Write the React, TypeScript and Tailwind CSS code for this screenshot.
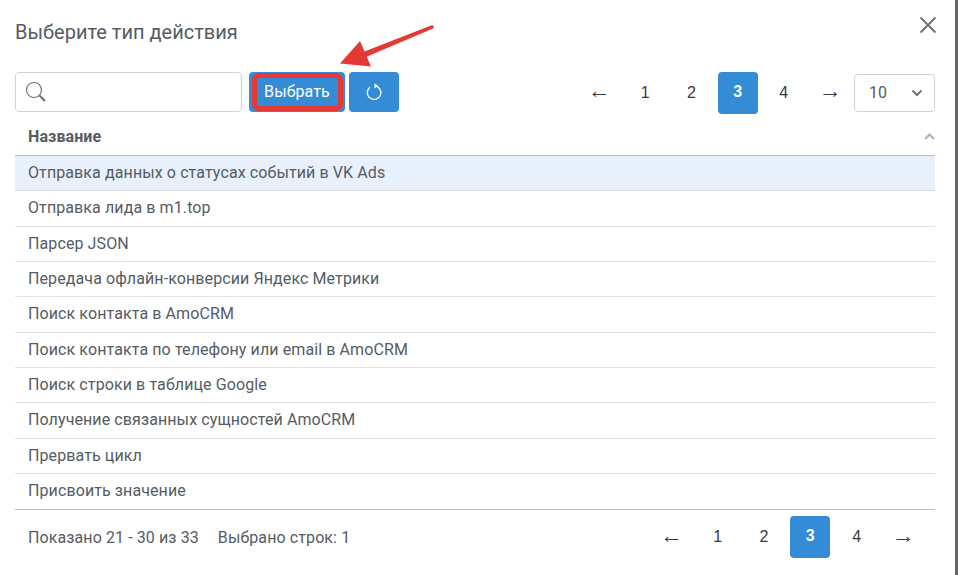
import React from 'react';

const rows = [
  'Отправка данных о статусах событий в VK Ads',
  'Отправка лида в m1.top',
  'Парсер JSON',
  'Передача офлайн-конверсии Яндекс Метрики',
  'Поиск контакта в AmoCRM',
  'Поиск контакта по телефону или email в AmoCRM',
  'Поиск строки в таблице Google',
  'Получение связанных сущностей AmoCRM',
  'Прервать цикл',
  'Присвоить значение',
];

const Pager = ({ className }: { className: string }) => (
  <div className={`flex items-center text-[16px] text-[#3a3a3a] font-['Liberation_Sans',sans-serif] ${className}`}>
    {['←', '1', '2', '3', '4', '→'].map((item) => (
      <span
        key={item}
        className={
          item === '3'
            ? 'flex h-[42px] w-10 items-center justify-center rounded-[4px] bg-[#348bd6] pb-[2px] font-bold text-white'
            : item === '←' || item === '→'
              ? 'flex h-[42px] w-10 items-center justify-center pb-[5px] text-[23px]'
              : 'flex h-[42px] w-10 items-center justify-center'
        }
      >
        {item}
      </span>
    ))}
  </div>
);

const App = () => {
  return (
    <div className="relative flex h-[575px] w-[958px] overflow-hidden bg-white font-['Roboto',sans-serif] tracking-[0.1px] text-[#555c63]">
      <div className="flex h-full w-[955px] flex-col pl-[15px] pr-[20px]">
        <div className="flex h-[72px] items-start justify-between">
          <h1 className="mt-[20px] text-[20px] leading-6 tracking-normal">Выберите тип действия</h1>
          <svg className="mt-[16px] mr-[-2px]" width="18" height="18" viewBox="0 0 18 18" fill="none" stroke="#6c757d" strokeWidth="2">
            <path d="M1.5 1.5 16.5 16.5M16.5 1.5 1.5 16.5" />
          </svg>
        </div>

        <div className="flex h-10 items-start">
          <div className="flex h-10 w-[227px] items-center rounded-[4px] border border-[#ced4da] bg-white pl-[9px]">
            <svg width="22" height="24" viewBox="0 0 22 24" fill="none" stroke="#6c757d">
              <circle cx="9" cy="10" r="7.5" strokeWidth="1.2" />
              <path d="M14.5 15.5 20 21" strokeWidth="2.2" />
            </svg>
          </div>
          <button className="relative ml-[7px] flex h-10 w-[96px] items-center justify-center rounded-[4px] bg-[#348bd6] text-[16px] text-white">
            Выбрать
            <span className="absolute bottom-[1px] left-[3px] right-[2px] top-[1px] rounded-[7px] border-[5px] border-[#e53935]" />
          </button>
          <button className="ml-[4px] flex h-10 w-[50px] items-center justify-center rounded-[4px] bg-[#348bd6]">
            <svg className="mb-[1px]" width="18" height="18" viewBox="0 0 18 18" fill="none" stroke="white" strokeWidth="1.3">
              <path d="M5 4.200A6.800 6.800 0 1 0 9.500 2.800" />
              <path d="M9.500 0.200 13.500 3 9.500 5.400Z" fill="white" stroke="none" />
            </svg>
          </button>
          <div className="ml-auto flex items-start">
            <Pager className="gap-[6.2px]" />
            <div className="ml-[4px] mt-[2px] flex h-[38px] w-[81px] items-center justify-between rounded-[4px] border border-[#ced4da] pl-[14px] pr-[11px] text-[16px]">
              10
              <svg width="12" height="8" viewBox="0 0 12 8" fill="none" stroke="#6c757d" strokeWidth="2">
                <path d="M1.5 1.5 6 6l4.5-4.5" />
              </svg>
            </div>
          </div>
        </div>

        <div className="flex h-[44px] items-center justify-between border-b border-[#b9bcc0] pl-[13px] pt-[6px]">
          <span className="text-[16px] font-bold">Название</span>
          <svg className="mb-[1px]" width="11" height="7" viewBox="0 0 11 7" fill="none" stroke="#adb1b5" strokeWidth="2">
            <path d="M1 6 5.500 1.500 10 6" />
          </svg>
        </div>

        <div>
          {rows.map((row, i) => (
            <div
              key={row}
              className={`flex items-center pl-[13px] text-[16px] ${
                i === 9 ? 'h-[36.33px] border-b border-[#b9bcc0] pb-[1px]' : 'h-[35.33px] border-b border-[#dee2e6]'
              } ${i === 0 ? 'bg-[#e8f0fb]' : ''}`}
            >
              {row}
            </div>
          ))}
        </div>

        <div className="flex items-start justify-between pl-[13px] pr-[12px] pt-[6px]">
          <div className="mt-[10px] flex gap-[19px] text-[16px] leading-6">
            <span>Показано 21 - 30 из 33</span>
            <span>Выбрано строк: 1</span>
          </div>
          <Pager className="gap-[6.33px]" />
        </div>
      </div>
      <div className="h-full w-[3px] bg-[#666]" />

      <svg className="absolute left-0 top-0" width="958" height="120" fill="none">
        <path d="M431 25.500 433 28.500 360 59.500 358 54Z" fill="#e53935" />
        <circle cx="432" cy="27" r="1.800" fill="#e53935" />
        <path d="M340 63.500 360 41 371 66.500Z" fill="#e53935" />
      </svg>
    </div>
  );
};

export default App;
